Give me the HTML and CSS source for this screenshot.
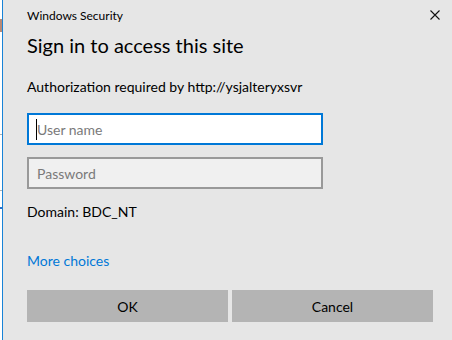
FILE: index.html
```html
<!DOCTYPE html>
<html>
<head>
  <title>Windows Security</title>
  <meta name="viewport" content="width=device-width, initial-scale=1.0">
  <link rel="stylesheet" href="styles.css">
</head>
<body>
  <div class="desktop">
    <span class="mark mark-brown"></span>
    <span class="mark mark-line1"></span>
    <span class="mark mark-line2"></span>
    <span class="mark mark-blue"></span>
  </div>

  <div class="dialog">
    <div class="titlebar">
      <span class="app-name">Windows Security</span>
      <button type="button" class="close" aria-label="Close">
        <svg width="10" height="10" viewBox="0 0 10 10">
          <path d="M0.5 0.5 L9.5 9.5 M9.5 0.5 L0.5 9.5" stroke="#111" stroke-width="1.1" fill="none"/>
        </svg>
      </button>
    </div>

    <h1>Sign in to access this site</h1>

    <p class="info">Authorization required by http://ysjalteryxsvr</p>

    <form id="signinForm">
      <div class="field focused">
        <span class="caret"></span>
        <input type="text" placeholder="User name">
      </div>
      <div class="field">
        <input type="password" placeholder="Password">
      </div>

      <p class="domain">Domain: BDC_NT</p>

      <a href="#" class="more">More choices</a>

      <div class="actions">
        <button type="submit">OK</button>
        <button type="button">Cancel</button>
      </div>
    </form>
  </div>
</body>
</html>
```

FILE: styles.css
```css
* {
  box-sizing: border-box;
}

body {
  margin: 0;
  height: 340px;
  display: flex;
  background: #fff;
  font-family: Lato, "Noto Sans", sans-serif;
  color: #000;
  overflow: hidden;
}

/* bit of the desktop showing on the left */
.desktop {
  position: relative;
  width: 2px;
  flex: none;
}

.mark {
  position: absolute;
  left: 0;
  width: 2px;
}

.mark-brown {
  top: 19px;
  height: 13px;
  background: #b98a76;
}

.mark-line1 {
  top: 134px;
  height: 1px;
  background: #b0b0b0;
}

.mark-line2 {
  top: 190px;
  height: 1px;
  background: #b0b0b0;
}

.mark-blue {
  top: 207px;
  height: 2px;
  background: #2a6fc9;
}

.dialog {
  flex: 1;
  background: #e6e6e6;
  border-left: 1px solid #1883d7;
  padding: 0 19px 0 24px;
}

.titlebar {
  display: flex;
  justify-content: space-between;
  align-items: center;
  height: 28px;
  padding-top: 2px;
}

.app-name {
  font-size: 12px;
}

.close {
  background: none;
  border: none;
  padding: 0;
  width: 10px;
  height: 10px;
  margin-right: -7px;
  display: flex;
}

h1 {
  font-weight: normal;
  font-size: 20px;
  margin: 3px 0 0;
  line-height: 28px;
}

.info {
  font-size: 14px;
  margin: 18px 0 0;
  line-height: 20px;
}

form {
  margin-top: 16px;
}

.field {
  position: relative;
  width: 296px;
  height: 32px;
  border: 2px solid #999;
  background: #f0f0f0;
  margin-bottom: 12px;
}

.field.focused {
  border-color: #0078d7;
  background: #fff;
}

.field input {
  width: 100%;
  height: 100%;
  border: none;
  background: transparent;
  padding: 0 8px;
  font-family: inherit;
  font-size: 14px;
  color: #000;
  outline: none;
}

.field input::placeholder {
  color: #7a7a7a;
}

.caret {
  position: absolute;
  left: 7px;
  top: 4px;
  width: 1px;
  height: 21px;
  background: #000;
}

.domain {
  font-size: 14px;
  margin: 0;
  line-height: 20px;
  padding-top: 1px;
}

.more {
  display: block;
  font-size: 14px;
  color: #0078d7;
  text-decoration: none;
  margin-top: 29px;
  line-height: 20px;
}

.actions {
  display: grid;
  grid-template-columns: 1fr 1fr;
  gap: 4px;
  margin-top: 19px;
}

.actions button {
  height: 32px;
  border: none;
  background: #b4b4b4;
  font-family: inherit;
  font-size: 14px;
  color: #000;
}
```
